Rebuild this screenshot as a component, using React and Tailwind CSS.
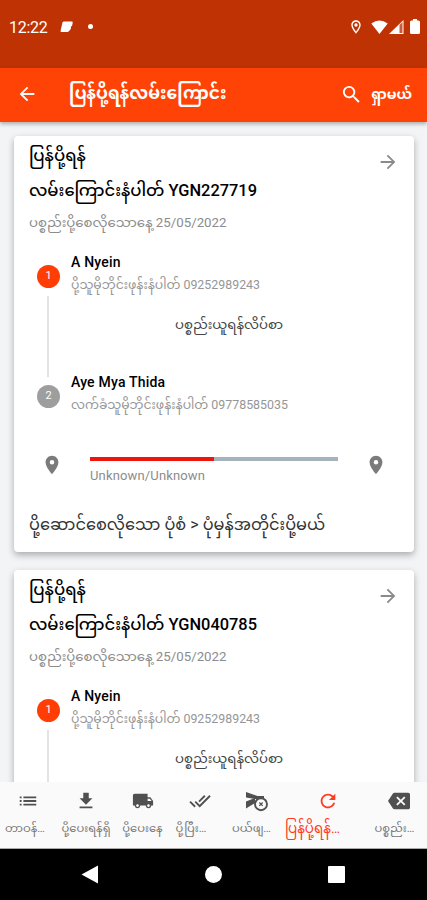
import React from "react";
import {
  MdArrowBack,
  MdArrowForward,
  MdSearch,
  MdLocationOn,
  MdOutlineLocationOn,
  MdList,
  MdDownload,
  MdLocalShipping,
  MdDoneAll,
  MdRefresh,
  MdBackspace,
} from "react-icons/md";

function Line({ children, className }) {
  return <div className={"flex items-center whitespace-nowrap " + className}>{children}</div>;
}

function StatusBar() {
  return (
    <div className="flex h-[68px] shrink-0 items-start bg-[#bf3203] pl-[9px] pr-[7px] pt-[17px] text-white">
      <span className="h-[22px] text-[16px] leading-[22px] tracking-[-0.3px]">12:22</span>
      <svg className="ml-[13px] mt-[4px] h-[12px] w-[13px]" viewBox="0 0 13 12" fill="currentColor">
        <path d="M3.600.500H11.800q1.200 0 .9 1.200l-.6 3-1 .8-.4 2.500q-.3 1-1.200 1.400L8 11H1.500q-1.200 0-.9-1.200L2.400 1.700Q2.600.700 3.600.500z" />
      </svg>
      <span className="ml-[15px] mt-[7px] h-[5px] w-[5px] rounded-full bg-white" />
      <span className="grow" />
      <MdOutlineLocationOn className="mt-[2px] h-[16px] w-[16px]" />
      <svg className="ml-[7px] mt-[3px] h-[14px] w-[17px]" viewBox="0 0 17 14" fill="currentColor">
        <path d="M.3 3.500Q8.500-2.500 16.700 3.500L8.500 14z" />
      </svg>
      <svg className="ml-px mt-[3px] h-[14px] w-[15px]" viewBox="0 0 15 14">
        <path d="M0 14 14.500 0v14z" fill="currentColor" />
        <path d="M10.500 5v8h3V2z" fill="#c95a3d" />
      </svg>
      <svg className="ml-[6px] mt-[2px] h-[15px] w-[10px]" viewBox="0 0 10 15" fill="currentColor">
        <path d="M3 0h4v1.500h1.500Q10 1.500 10 3v10.500q0 1.500-1.500 1.500h-7Q0 15 0 13.500V3q0-1.500 1.500-1.500H3z" />
      </svg>
    </div>
  );
}

function AppBar() {
  return (
    <div className="relative z-10 flex h-[54px] shrink-0 items-center bg-[#ff4306] pb-[2px] pl-[16px] pr-[15px] text-white shadow-[0_2px_4px_rgba(0,0,0,0.3)]">
      <MdArrowBack className="h-[22px] w-[22px]" />
      <span className="mb-[2px] ml-[31px] whitespace-nowrap text-[17px] font-bold leading-6">ပြန်ပို့ရန်လမ်းကြောင်း</span>
      <span className="grow" />
      <MdSearch className="mr-[8px] h-[23px] w-[23px]" />
      <span className="whitespace-nowrap text-[14px] font-bold leading-6">ရှာမယ်</span>
    </div>
  );
}

function RouteCard({ code }) {
  return (
    <div className="h-[416px] shrink-0 rounded-[4px] bg-white px-[15px] text-black shadow-[0_3px_7px_rgba(0,0,0,0.3)]">
      <div className="flex h-[69px] justify-between">
        <div>
          <Line className="h-[40px] text-[16.5px] font-medium">ပြန်ပို့ရန်</Line>
          <Line className="h-[30px] text-[16.4px] font-medium">လမ်းကြောင်းနံပါတ် {code}</Line>
        </div>
        <MdArrowForward className="mt-[15px] h-[22px] w-[22px] text-[#8a8a8a]" />
      </div>
      <Line className="h-[36px] text-[13.3px] text-[#8c8c8c]">ပစ္စည်းပို့စေလိုသောနေ့ 25/05/2022</Line>
      <div className="flex pt-[11px]">
        <div className="flex w-[42px] flex-col items-start pl-[8px] pt-[13px]">
          <div className="flex h-[23px] w-[23px] items-center justify-center rounded-full bg-[#ff3d05] text-[11px] text-white">1</div>
          <div className="ml-[10px] mt-[8px] h-[81px] w-[2px] bg-[#e3e3e3]" />
          <div className="mt-[8px] flex h-[23px] w-[23px] items-center justify-center rounded-full bg-[#9e9e9e] text-[11px] text-white">2</div>
        </div>
        <div className="grow">
          <Line className="h-[20px] text-[14px] font-medium tracking-[0.2px]">A Nyein</Line>
          <Line className="h-[26px] text-[12.4px] text-[#969696]">ပို့သူမိုဘိုင်းဖုန်းနံပါတ် 09252989243</Line>
          <Line className="h-[54px] pl-[104px] text-[13.3px] text-[#444]">ပစ္စည်းယူရန်လိပ်စာ</Line>
          <Line className="mt-[20px] h-[20px] text-[14px] font-medium tracking-[0.2px]">Aye Mya Thida</Line>
          <Line className="h-[26px] text-[12.4px] text-[#969696]">လက်ခံသူမိုဘိုင်းဖုန်းနံပါတ် 09778585035</Line>
        </div>
      </div>
      <div className="mt-[36px] flex h-[40px] items-start pl-[12px] text-[#7b7b7b]">
        <MdLocationOn className="h-[22px] w-[22px] shrink-0" />
        <div className="ml-[27px] w-[248px] shrink-0 pt-[3px]">
          <div className="flex h-[4px] bg-[#a5b4bc]">
            <div className="w-1/2 bg-[#ee160c]" />
          </div>
          <Line className="h-[25px] pt-[4px] text-[13px] tracking-[0.15px] text-[#8c8c8c]">Unknown/Unknown</Line>
        </div>
        <MdLocationOn className="ml-[27px] h-[22px] w-[22px] shrink-0" />
      </div>
      <Line className="mt-[11px] h-[40px] text-[16.15px] text-[#333]">ပို့ဆောင်စေလိုသော ပုံစံ &gt; ပုံမှန်အတိုင်းပို့မယ်</Line>
    </div>
  );
}

function CancelShipment({ className }) {
  return (
    <svg className={className} viewBox="0 0 22 22" fill="none" stroke="currentColor">
      <path d="M0 2 11.500 6H18v3H9L0 7.500z" fill="currentColor" stroke="none" />
      <path d="M0 11.500 9 8v5L0 18.500z" fill="currentColor" stroke="none" />
      <circle cx="15" cy="14.200" r="6" fill="#fafafa" strokeWidth="1.900" />
      <path d="m13.300 12.500 3.400 3.400m0-3.400-3.400 3.400" strokeWidth="1.200" />
    </svg>
  );
}

const tabs = [
  { label: "တာဝန်…", Icon: MdList, box: "w-[56px]", text: "text-[11.5px] text-[#777] pr-[6px]" },
  { label: "ပို့ပေးရန်ရှိ", Icon: MdDownload, box: "w-[60px]", text: "text-[11.5px] text-[#777]" },
  { label: "ပို့ပေးနေ", Icon: MdLocalShipping, box: "w-[53px]", text: "text-[11.5px] text-[#777]" },
  { label: "ပို့ပြီး…", Icon: MdDoneAll, box: "w-[61px]", text: "text-[11.5px] text-[#777] pr-[17px]" },
  { label: "ပယ်ဖျ…", Icon: CancelShipment, box: "w-[54px]", text: "text-[11.5px] text-[#777] pr-[11px]" },
  { label: "ပြန်ပို့ရန်…", Icon: MdRefresh, box: "w-[87px]", text: "text-[13.5px] pr-[30px]", active: true },
  { label: "ပစ္စည်း…", Icon: MdBackspace, box: "w-[56px]", text: "text-[11.5px] text-[#777] pr-[9px]" },
];

function TabBar() {
  return (
    <div className="relative z-10 flex h-[67px] shrink-0 border-b border-[#aaa] bg-[#fafafa]">
      {tabs.map(({ label, Icon, box, text, active }) => (
        <div
          key={label}
          className={"flex shrink-0 flex-col items-center pt-[8px] " + box + (active ? " text-[#ff3b22]" : " text-[#505050]")}
        >
          <Icon className="h-[22px] w-[22px] shrink-0" />
          <span className={"mt-[3px] whitespace-nowrap leading-[26px] " + text}>{label}</span>
        </div>
      ))}
    </div>
  );
}

export default function App() {
  return (
    <div className="flex h-[900px] w-[427px] flex-col overflow-hidden bg-[#f2f4f6] font-['Roboto','Noto_Sans_Myanmar','Noto_Sans',sans-serif]">
      <StatusBar />
      <AppBar />
      <div className="flex min-h-0 grow flex-col gap-[18px] overflow-hidden pl-[14px] pr-[13px] pt-[14px]">
        <RouteCard code="YGN227719" />
        <RouteCard code="YGN040785" />
      </div>
      <TabBar />
      <div className="flex h-[51px] shrink-0 items-center bg-black pl-[81px] text-white">
        <svg className="h-[19px] w-[18px]" viewBox="0 0 18 19" fill="currentColor"><path d="M17 .500v18L.500 9.500z" /></svg>
        <span className="ml-[106px] h-[17px] w-[17px] rounded-full bg-white" />
        <span className="ml-[106px] h-[17px] w-[17px] rounded-[1px] bg-white" />
      </div>
    </div>
  );
}
